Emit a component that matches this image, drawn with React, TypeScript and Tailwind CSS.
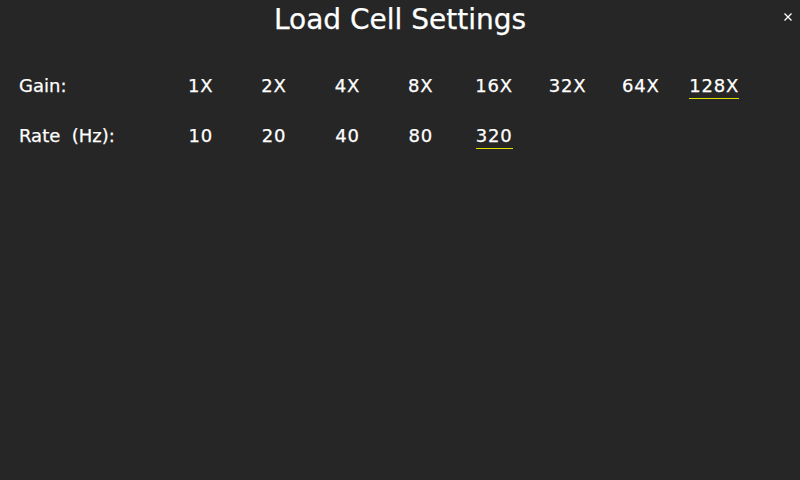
import React from "react";

const gains = ["1X", "2X", "4X", "8X", "16X", "32X", "64X", "128X"];
const rates = ["10", "20", "40", "80", "320"];

function Row({ label, items, selected }: { label: string; items: string[]; selected: string }) {
  return (
    <div className="grid grid-cols-[145px_repeat(8,73.375px)] h-[18px] leading-[18px]">
      <div className="whitespace-pre">{label}</div>
      {items.map((it) => (
        <div key={it} className="flex justify-center tracking-[0.8px]">
          <span className="flex flex-col items-stretch">
            <span>{it}</span>
            {it === selected && <span className="mt-[3px] h-[1px] bg-[#e0e000]" />}
          </span>
        </div>
      ))}
    </div>
  );
}

export default function App() {
  return (
    <div
      className="w-[800px] h-[480px] bg-[#262626] text-white overflow-hidden relative [-webkit-text-stroke:0.25px_white]"
      style={{ fontFamily: '"DejaVu Sans", sans-serif' }}
    >
      <div className="pt-[6px] text-center text-[28px] leading-[28px]">Load Cell Settings</div>
      <button className="absolute top-[10px] right-[5px] w-[14px] h-[14px] flex items-center justify-center">
        <svg width="8" height="8" viewBox="0 0 8 8">
          <path d="M0.5 0.5L7.5 7.5M7.5 0.5L0.5 7.5" stroke="white" strokeWidth="1.3" />
        </svg>
      </button>
      <div className="mt-[43px] pl-[19px] flex flex-col gap-[32px] text-[18px]">
        <Row label="Gain:" items={gains} selected="128X" />
        <Row label={"Rate  (Hz):"} items={rates} selected="320" />
      </div>
    </div>
  );
}
